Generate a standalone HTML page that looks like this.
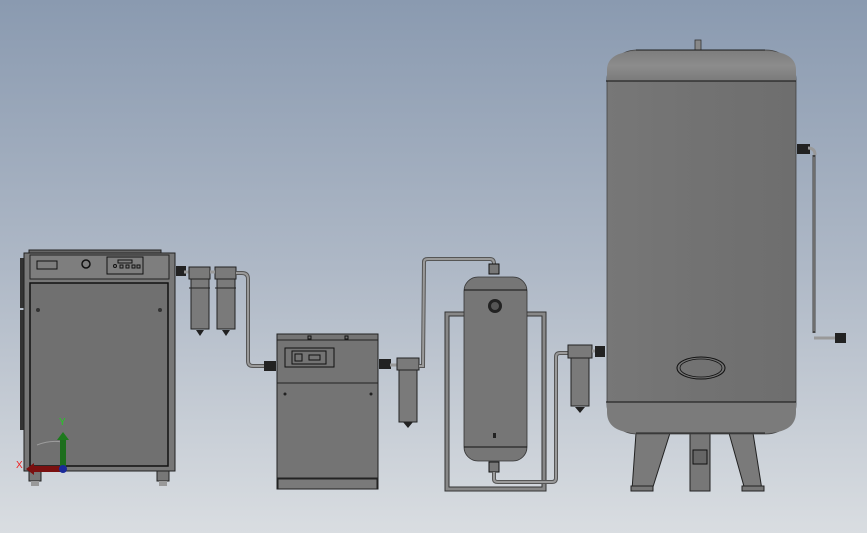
<!DOCTYPE html>
<html><head><meta charset="utf-8"><style>
html,body{margin:0;padding:0;width:867px;height:533px;overflow:hidden}
svg{display:block}
text{font-family:"Liberation Sans",sans-serif}
</style></head><body>
<svg width="867" height="533" viewBox="0 0 867 533" xmlns="http://www.w3.org/2000/svg">
<defs>
<linearGradient id="bg" x1="0" y1="0" x2="0" y2="1">
<stop offset="0" stop-color="#8a9ab0"/><stop offset="0.5" stop-color="#aeb8c6"/><stop offset="1" stop-color="#d9dde1"/>
</linearGradient>
<linearGradient id="dome" x1="0" y1="0" x2="0" y2="1">
<stop offset="0" stop-color="#7e7e7e"/><stop offset="0.5" stop-color="#8c8c8c"/><stop offset="1" stop-color="#7a7a7a"/>
</linearGradient>
<linearGradient id="cyl" x1="0" y1="0" x2="1" y2="0">
<stop offset="0" stop-color="#777"/><stop offset="0.5" stop-color="#727272"/><stop offset="1" stop-color="#6e6e6e"/>
</linearGradient>
</defs>
<rect width="867" height="533" fill="url(#bg)"/>

<!-- big tank -->
<rect x="695" y="40" width="6" height="11" fill="#888" stroke="#333" stroke-width="0.8"/>
<path d="M636 433 L670 433 L652 490 L632 490 Z" fill="#7a7a7a" stroke="#222" stroke-width="1"/>
<path d="M729 433 L753 433 L762 490 L745 490 Z" fill="#7a7a7a" stroke="#222" stroke-width="1"/>
<rect x="631" y="486" width="22" height="5" fill="#777" stroke="#222"/>
<rect x="742" y="486" width="22" height="5" fill="#777" stroke="#222"/>
<rect x="690" y="433" width="20" height="58" fill="#777" stroke="#222"/>
<rect x="693" y="450" width="14" height="14" fill="#666" stroke="#111"/>
<rect x="607" y="50" width="189" height="384" rx="30" ry="30" fill="url(#cyl)" stroke="#444" stroke-width="0.8"/>
<path d="M607 81 L607 70 Q607 51 640 51 L763 51 Q796 51 796 70 L796 81 Z" fill="url(#dome)"/>
<path d="M607 402 L796 402 L796 412 Q796 433 765 433 L638 433 Q607 433 607 412 Z" fill="#7b7b7b"/>
<line x1="636" y1="50" x2="765" y2="50" stroke="#222"/>
<line x1="606" y1="81" x2="796" y2="81" stroke="#111"/>
<line x1="606" y1="402" x2="796" y2="402" stroke="#111"/>
<line x1="636" y1="433" x2="765" y2="433" stroke="#222"/>
<ellipse cx="701" cy="368" rx="24" ry="11" fill="none" stroke="#111" stroke-width="1"/>
<ellipse cx="701" cy="368" rx="21" ry="9" fill="none" stroke="#111" stroke-width="0.8"/>
<!-- right sight pipe -->
<rect x="797" y="144" width="13" height="10" fill="#222"/>
<path d="M808 148 Q815 148 815 155" fill="none" stroke="#999" stroke-width="3"/>
<line x1="814" y1="155" x2="814" y2="333" stroke="#444" stroke-width="3"/>
<line x1="814" y1="157" x2="814" y2="331" stroke="#999" stroke-width="1"/>
<line x1="814" y1="338" x2="836" y2="338" stroke="#999" stroke-width="3"/>
<rect x="835" y="333" width="11" height="10" fill="#222"/>

<!-- compressor -->
<rect x="20" y="258" width="5" height="50" fill="#333"/>
<rect x="20" y="310" width="5" height="120" fill="#333"/>
<rect x="29" y="250" width="132" height="4" fill="#666" stroke="#222"/>
<rect x="24" y="253" width="151" height="218" fill="#777" stroke="#222"/>
<rect x="30" y="255" width="139" height="24" fill="#7e7e7e" stroke="#222"/>
<rect x="37" y="261" width="20" height="8" fill="none" stroke="#111"/>
<circle cx="86" cy="264" r="4" fill="none" stroke="#111" stroke-width="1.5"/>
<rect x="107" y="257" width="36" height="17" fill="none" stroke="#111"/>
<rect x="118" y="260" width="14" height="3" fill="none" stroke="#111"/>
<circle cx="115" cy="266" r="1.5" fill="none" stroke="#111"/>
<rect x="120" y="265" width="3" height="3" fill="none" stroke="#111"/>
<rect x="126" y="265" width="3" height="3" fill="none" stroke="#111"/>
<rect x="132" y="265" width="3" height="3" fill="none" stroke="#111"/>
<rect x="137" y="265" width="3" height="3" fill="none" stroke="#111"/>
<rect x="30" y="283" width="138" height="183" fill="#707070" stroke="#111" stroke-width="1.5"/>
<circle cx="38" cy="310" r="2" fill="#333"/><circle cx="160" cy="310" r="2" fill="#333"/>
<rect x="29" y="471" width="12" height="10" fill="#777" stroke="#222"/>
<rect x="157" y="471" width="12" height="10" fill="#777" stroke="#222"/>
<rect x="31" y="481" width="8" height="5" fill="#999"/><rect x="159" y="481" width="8" height="5" fill="#999"/>

<!-- axis triad -->
<path d="M37 445 Q50 440 62 442" fill="none" stroke="#bbb" stroke-width="1" opacity="0.6"/>
<rect x="60" y="440" width="6" height="30" fill="#1d6e1d"/>
<path d="M57 440 L63 432 L69 440 Z" fill="#1d7a1d"/>
<rect x="33" y="466" width="30" height="6" fill="#7a1010"/>
<path d="M34 463 L26 469 L34 475 Z" fill="#7a1010"/>
<circle cx="63" cy="469" r="4" fill="#1a2a9a"/>
<text x="59" y="425" font-size="10" fill="#2c2">Y</text>
<text x="16" y="468" font-size="10" fill="#e22">X</text>

<!-- filters after compressor -->
<rect x="176" y="266" width="10" height="10" fill="#222"/>
<line x1="184" y1="272" x2="190" y2="272" stroke="#999" stroke-width="3"/>
<g fill="#7a7a7a" stroke="#222">
<rect x="189" y="267" width="21" height="12"/><rect x="215" y="267" width="21" height="12"/>
<rect x="191" y="279" width="18" height="50"/><rect x="217" y="279" width="18" height="50"/>
</g>
<line x1="189" y1="288" x2="210" y2="288" stroke="#222"/><line x1="215" y1="288" x2="236" y2="288" stroke="#222"/>
<path d="M196 330 L204 330 L200 336 Z M222 330 L230 330 L226 336 Z" fill="#222"/>
<line x1="210" y1="272" x2="215" y2="272" stroke="#999" stroke-width="3"/>
<path d="M236 273 L242 273 Q248 273 248 279 L248 361 Q248 366 253 366 L264 366" fill="none" stroke="#555" stroke-width="4"/>
<path d="M236 273 L242 273 Q248 273 248 279 L248 361 Q248 366 253 366 L264 366" fill="none" stroke="#9a9a9a" stroke-width="2"/>
<rect x="264" y="361" width="12" height="10" fill="#222"/>

<!-- dryer -->
<rect x="277" y="334" width="101" height="155" fill="#747474" stroke="#222"/>
<line x1="277" y1="340" x2="378" y2="340" stroke="#222"/>
<rect x="308" y="336" width="3" height="3" fill="none" stroke="#111"/><rect x="345" y="336" width="3" height="3" fill="none" stroke="#111"/>
<rect x="285" y="348" width="49" height="19" fill="none" stroke="#111"/>
<rect x="292" y="351" width="34" height="13" fill="none" stroke="#111"/>
<rect x="295" y="354" width="7" height="7" fill="none" stroke="#111"/>
<rect x="309" y="355" width="11" height="5" fill="none" stroke="#111"/>
<line x1="277" y1="383" x2="378" y2="383" stroke="#222"/>
<circle cx="285" cy="394" r="1.5" fill="#222"/><circle cx="371" cy="394" r="1.5" fill="#222"/>
<line x1="277" y1="478" x2="378" y2="478" stroke="#222"/>
<rect x="278" y="479" width="99" height="10" fill="#7a7a7a" stroke="#222"/>

<!-- filter after dryer -->
<rect x="379" y="359" width="12" height="10" fill="#222"/>
<line x1="390" y1="365" x2="397" y2="365" stroke="#999" stroke-width="3"/>
<rect x="397" y="358" width="22" height="12" fill="#7a7a7a" stroke="#222"/>
<rect x="399" y="370" width="18" height="52" fill="#7a7a7a" stroke="#222"/>
<path d="M403 422 L413 422 L408 428 Z" fill="#222"/>
<path d="M419 366 L423 366 L424 262 Q424 259 428 259 L490 259 Q494 259 494 264" fill="none" stroke="#555" stroke-width="4"/>
<path d="M419 366 L423 366 L424 262 Q424 259 428 259 L490 259 Q494 259 494 264" fill="none" stroke="#9a9a9a" stroke-width="2"/>
<rect x="489" y="264" width="10" height="10" fill="#777" stroke="#111"/>

<!-- receiver with frame -->
<path d="M464 314 L447 314 L447 489 L544 489 L544 314 L527 314" fill="none" stroke="#333" stroke-width="5"/>
<path d="M464 314 L447 314 L447 489 L544 489 L544 314 L527 314" fill="none" stroke="#888" stroke-width="3"/>
<rect x="464" y="277" width="63" height="184" rx="14" ry="14" fill="#767676" stroke="#333" stroke-width="0.8"/>
<line x1="464" y1="290" x2="527" y2="290" stroke="#111"/>
<line x1="464" y1="447" x2="527" y2="447" stroke="#111"/>
<circle cx="495" cy="306" r="7" fill="#222"/><circle cx="495" cy="306" r="4" fill="#555"/>
<rect x="493" y="433" width="3" height="5" fill="#222"/>
<rect x="489" y="462" width="10" height="10" fill="#777" stroke="#111"/>
<path d="M494 472 L494 479 Q494 482 498 482 L552 482 Q556 482 556 478 L556 357 Q556 353 560 353 L568 353" fill="none" stroke="#555" stroke-width="4"/>
<path d="M494 472 L494 479 Q494 482 498 482 L552 482 Q556 482 556 478 L556 357 Q556 353 560 353 L568 353" fill="none" stroke="#9a9a9a" stroke-width="2"/>

<!-- filter near big tank -->
<rect x="568" y="345" width="24" height="13" fill="#7a7a7a" stroke="#222"/>
<rect x="571" y="358" width="18" height="48" fill="#7a7a7a" stroke="#222"/>
<path d="M575 407 L585 407 L580 413 Z" fill="#222"/>
<line x1="592" y1="351" x2="597" y2="351" stroke="#999" stroke-width="3"/>
<rect x="595" y="346" width="10" height="11" fill="#222"/>
</svg>
</body></html>
